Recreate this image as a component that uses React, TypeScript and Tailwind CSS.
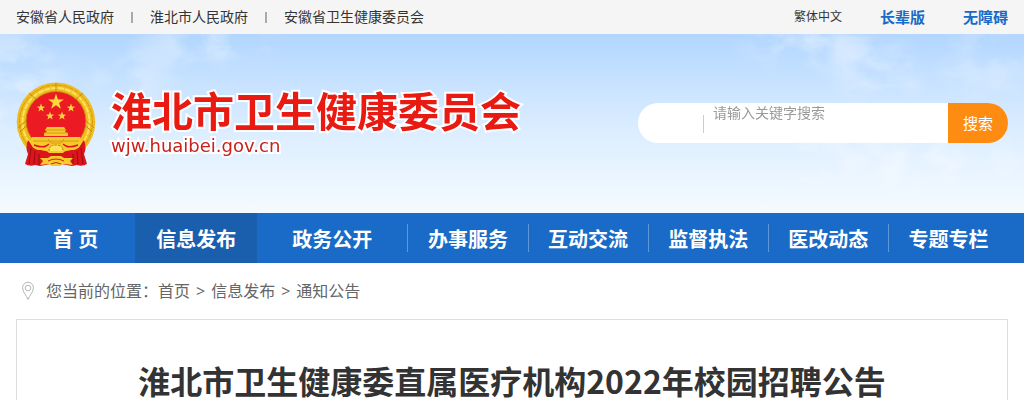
const sites = ["安徽省人民政府", "淮北市人民政府", "安徽省卫生健康委员会"];

const menu = [
    { label: "首 页", width: "grow-119" },
    { label: "信息发布", width: "grow-122 bg-[#1a5fae]" },
    { label: "政务公开", width: "grow-150" },
    { label: "办事服务", width: "grow-120", divider: true },
    { label: "互动交流", width: "grow-120", divider: true },
    { label: "监督执法", width: "grow-120", divider: true },
    { label: "医改动态", width: "grow-120", divider: true },
    { label: "专题专栏", width: "grow-120", divider: true },
];

const crumbs = ["首页", "信息发布", "通知公告"];

const STAR =
    "M0 -10 L2.4 -3.2 L9.5 -3.1 L3.8 1.2 L5.9 8.1 L0 4 L-5.9 8.1 L-3.8 1.2 L-9.5 -3.1 L-2.4 -3.2 Z";

function Emblem() {
    return (
        <svg className="h-[86px] w-20 shrink-0" viewBox="0 0 80 86" aria-hidden="true">
            <ellipse cx="40" cy="40" rx="39.3" ry="39.5" fill="#f0bd20" />
            <ellipse cx="40" cy="40" rx="36.500" ry="37" fill="none" stroke="#d39a14" strokeWidth="1" strokeDasharray="5 1" />
            <ellipse cx="40" cy="40" rx="33.500" ry="34" fill="none" stroke="#ffe25a" strokeWidth="2" strokeDasharray="6 1" />
            <path d="M2 46 L11 38 M4 50 L12 42 M78 46 L69 38 M76 50 L68 42 M13 11 L20 17 M67 11 L60 17 M40 1 V9" stroke="#c48b12" strokeWidth="1" />
            <ellipse cx="40" cy="39" rx="30" ry="29.500" fill="#ec1a22" stroke="#c48b12" strokeWidth="1" />
            <g fill="#fbd93c">
                <path d={STAR} transform="translate(40 20) scale(.82)" />
                <path d={STAR} transform="translate(25 26) scale(.44)" />
                <path d={STAR} transform="translate(55 26) scale(.44)" />
                <path d={STAR} transform="translate(34 34) scale(.44)" />
                <path d={STAR} transform="translate(46 34) scale(.44)" />
            </g>
            <path d="M12 58 Q9 66 12 72 L9 82 Q14 85 19 83 L24 84 L40 81 L56 84 L61 83 Q66 85 71 82 L68 72 Q71 66 68 58 L62 66 Q40 74 18 66 Z" fill="#dc141c" />
            <path d="M15 66 L13 82 M19 69 L18 82 M23 72 L23 83 M65 66 L67 82 M61 69 L62 82 M57 72 L57 83" stroke="#970d13" fill="none" />
            <g fill="#f7ca2c">
                <path d="M31 45 L48 45 L50 48 L49 50 L52 51 L52 54 L28 54 L28 51 L31 50 L29 48 Z" />
                <path d="M16 55 L64 55 L66 59 Q65 66 58 68 L50 68 L47 71 L33 71 L30 68 L22 68 Q15 66 14 59 Z" />
                <path d="M24 76 L32 76 L35 74 L45 74 L48 76 L57 76 L54 79 L57 83 L48 82 L44 84 L36 84 L32 82 L24 83 L27 79 Z" />
            </g>
            <path d="M29 48 H50 M28 51 H52 M17 59 H63 M32 57 L35 61 H45 L48 57" stroke="#cf8d12" strokeWidth=".8" fill="none" />
            <path d="M18 63 Q26 66 30 64 L33 62 M62 63 Q54 66 50 64 L47 62" stroke="#dc141c" strokeWidth="1.500" fill="none" />
            <path d="M33 69 Q33 63 40 63 Q47 63 47 69" fill="#ffe25a" stroke="#b9770d" strokeDasharray="2 1" />
            <path d="M32 79 Q40 75 48 79 M35 82 Q40 79 45 82" stroke="#c7271a" fill="none" />
        </svg>
    );
}

function Sky() {
    return (
        <svg className="absolute inset-0 size-full" viewBox="0 0 1024 179" preserveAspectRatio="none" aria-hidden="true">
            <defs>
                <filter id="cloud" x="0" y="0" width="1024" height="179" filterUnits="userSpaceOnUse">
                    <feGaussianBlur in="SourceGraphic" stdDeviation="12" result="soft" />
                    <feTurbulence type="fractalNoise" baseFrequency=".022 .035" numOctaves="5" seed="4" />
                    <feColorMatrix values="0 0 0 0 1  0 0 0 0 1  0 0 0 0 1  3.500 0 0 0 -1.300" result="wisps" />
                    <feComposite in="soft" in2="wisps" operator="in" />
                </filter>
            </defs>
            <g fill="#fff" filter="url(#cloud)">
                <ellipse cx="210" cy="8" rx="60" ry="20" opacity=".4" />
                <ellipse cx="5" cy="50" rx="60" ry="60" opacity=".3" />
                <ellipse cx="130" cy="40" rx="40" ry="32" opacity=".25" />
                <ellipse cx="805" cy="8" rx="60" ry="20" opacity=".45" />
                <ellipse cx="880" cy="36" rx="45" ry="26" opacity=".35" />
                <ellipse cx="990" cy="30" rx="50" ry="36" opacity=".25" />
                <ellipse cx="900" cy="125" rx="120" ry="26" opacity=".35" />
            </g>
        </svg>
    );
}

export default function App() {
    return (
        <div className="overflow-hidden bg-white font-['Open_Sans','Noto_Sans_CJK_SC',sans-serif] text-[#333]">
            <div className="flex h-[34px] items-center justify-between bg-[#f5f5f5] px-4">
                <ul className="flex items-center text-sm">
                    {sites.map((site, index) => (
                        <li key={site} className="flex items-center">
                            {index > 0 && <span className="mx-[17px] h-[11px] w-0.5 bg-[#aaa]" />}
                            <a href="#">{site}</a>
                        </li>
                    ))}
                </ul>
                <div className="flex items-center gap-[38px]">
                    <a href="#" className="text-xs">繁体中文</a>
                    <a href="#" className="text-[15px] font-bold text-[#1a6bc7]">长辈版</a>
                    <a href="#" className="text-[15px] font-bold text-[#1a6bc7]">无障碍</a>
                </div>
            </div>

            <header className="relative h-[179px] bg-linear-to-b from-[#b2d6ff] via-[#d9ecff] to-[#f5fbff]">
                <Sky />
                <div className="relative flex items-start justify-between px-4 pt-12">
                    <a href="#" className="flex items-start gap-[15px]">
                        <Emblem />
                        <div className="pt-1 text-[#e81a12] [-webkit-text-stroke:4px_white] [paint-order:stroke_fill]">
                            <div className="text-[41px] leading-[50px] font-bold">淮北市卫生健康委员会</div>
                            <div className="font-['DejaVu_Sans',sans-serif] text-lg leading-5 text-[#c9211c]">
                                wjw.huaibei.gov.cn
                            </div>
                        </div>
                    </a>
                    <form className="mt-[21px] flex h-10 w-[370px] overflow-hidden rounded-full bg-white">
                        <select aria-label="搜索范围" className="w-[65px] shrink-0 appearance-none" />
                        <span className="mt-3 h-[18px] w-px bg-[#ccc]" />
                        <input
                            type="text"
                            aria-label="关键字"
                            placeholder="请输入关键字搜索"
                            className="h-5 min-w-0 flex-1 px-[9px] text-sm leading-5 outline-none placeholder:text-[#999]"
                        />
                        <button type="button" className="w-[60px] bg-[#ff8c12] text-[15px] text-white">搜索</button>
                    </form>
                </div>
            </header>

            <nav className="bg-[#1a6bc7] px-4">
                <ul className="flex h-[50px]">
                    {menu.map((item) => (
                        <li key={item.label} className={`flex basis-0 items-center ${item.width}`}>
                            {item.divider && <span className="h-7 w-px bg-[#5f98d8]" />}
                            <a href="#" className="flex-1 pt-[3px] text-center text-xl font-bold whitespace-nowrap text-white">
                                {item.label}
                            </a>
                        </li>
                    ))}
                </ul>
            </nav>

            <main className="px-4">
                <div className="flex h-14 items-center pl-1.5 text-[#666]">
                    <svg className="mr-3 h-5 w-3" viewBox="0 0 12 20" fill="none" stroke="#b5b5b5" aria-hidden="true">
                        <path d="M6 18.500 C4.500 14.500 .6 11 .6 6.800 A5.400 5.600 0 0 1 11.400 6.800 C11.400 11 7.500 14.500 6 18.500 Z" />
                        <circle cx="6" cy="7" r="2.800" />
                    </svg>
                    <span>您当前的位置：</span>
                    {crumbs.map((crumb, index) => (
                        <span key={crumb} className="flex">
                            {index > 0 && <span className="mx-1.5">&gt;</span>}
                            <a href="#">{crumb}</a>
                        </span>
                    ))}
                </div>
                <article className="border border-b-0 border-[#ddd] px-4 pt-10">
                    <h1 className="text-center font-['Noto_Sans_CJK_SC',sans-serif] text-[32px] leading-10 font-bold">
                        淮北市卫生健康委直属医疗机构2022年校园招聘公告
                    </h1>
                </article>
            </main>
        </div>
    );
}
